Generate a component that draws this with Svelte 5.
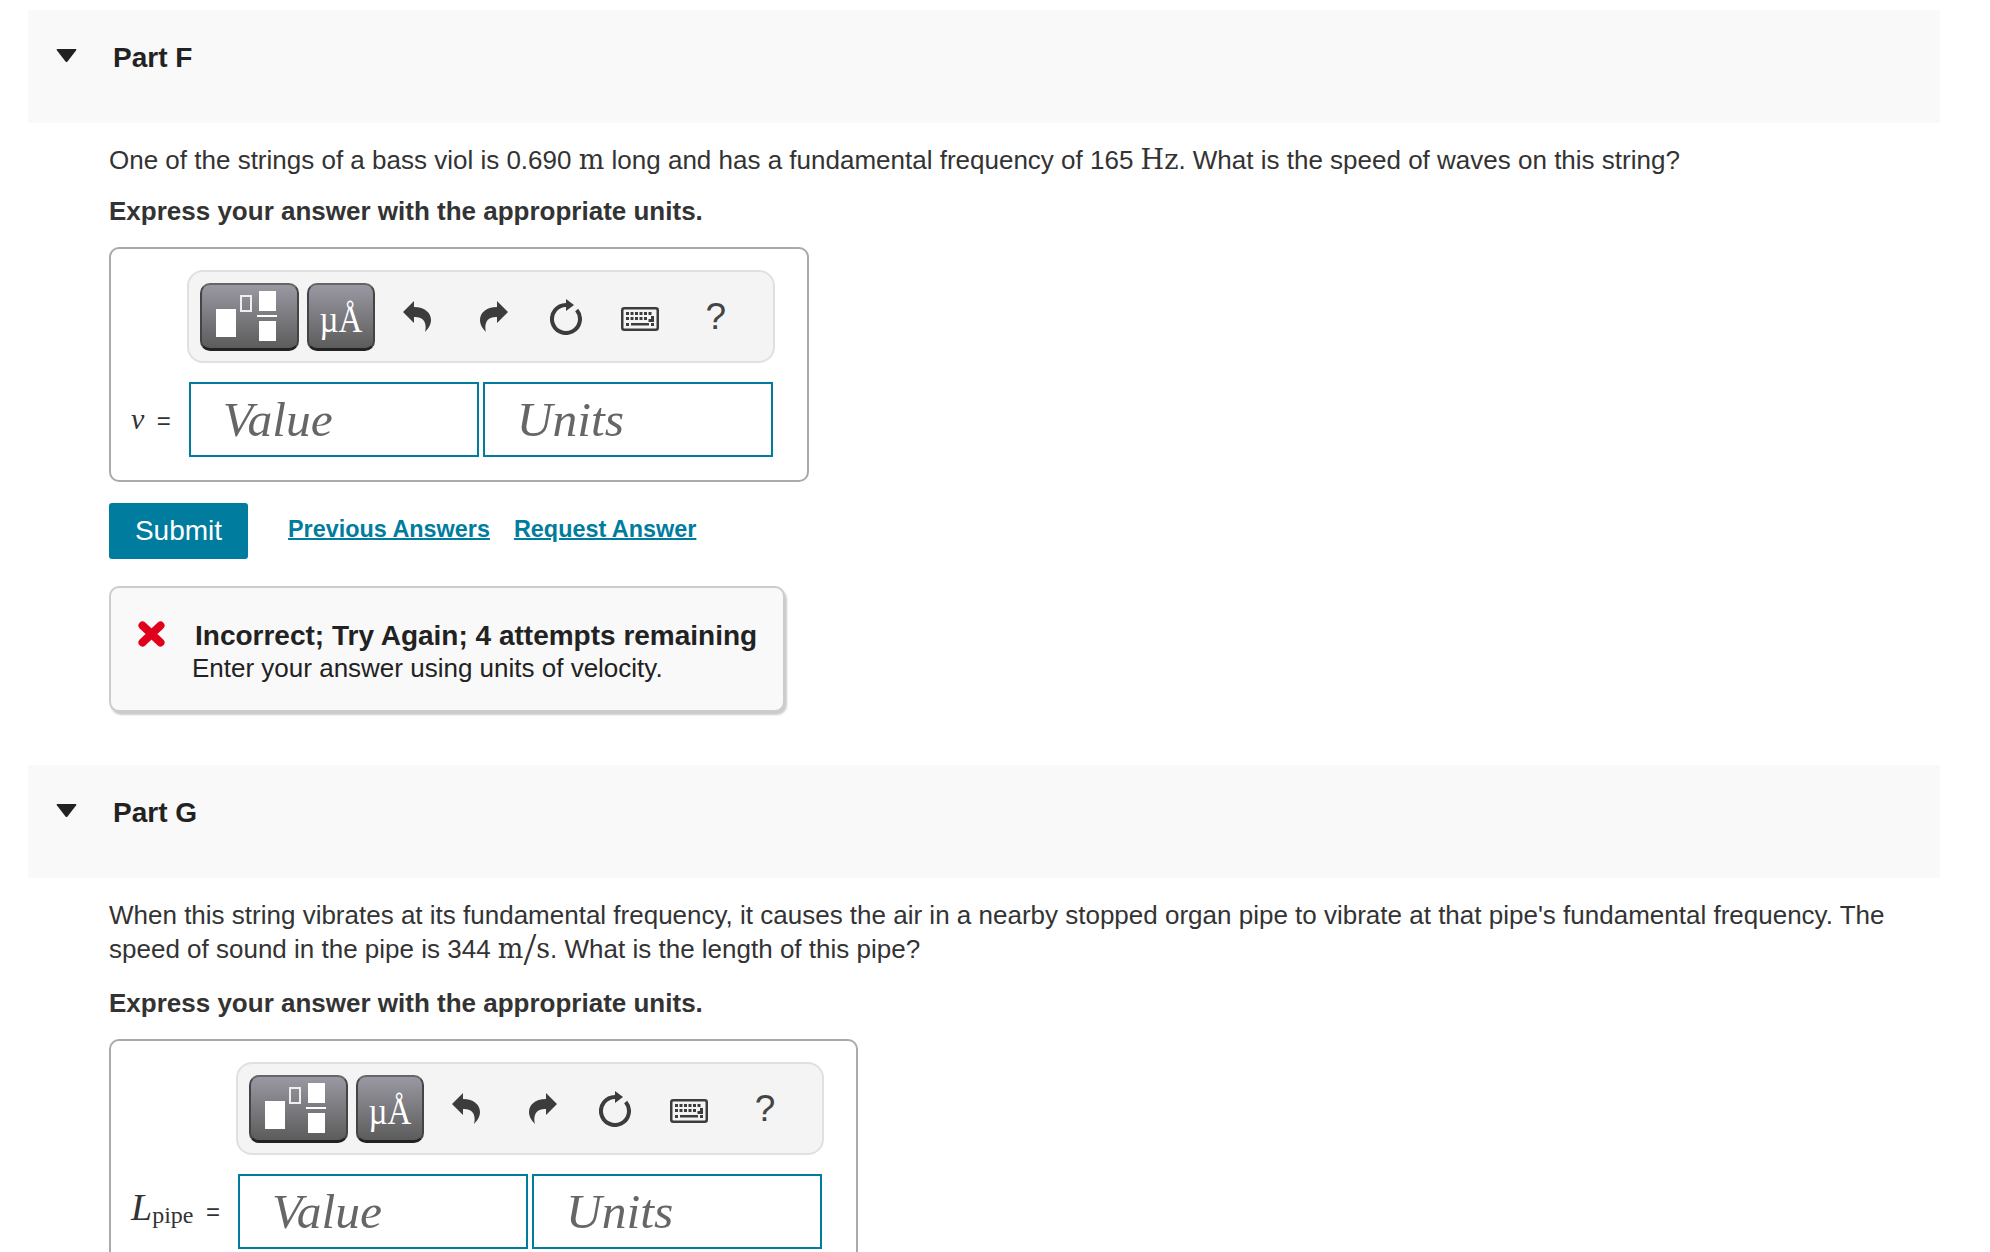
<script>
  const keyRows = [
    { y: 5, xs: [5, 9.5, 14, 18.5, 23, 27.5] },
    { y: 10, xs: [5, 9.5, 14, 18.5, 23] },
  ];
</script>

{#snippet toolbar()}
  <div class="toolbar">
    <span class="tool wide">
      <svg width="61" height="50" viewBox="0 0 61 50">
        <rect x="0" y="18" width="20" height="28" fill="#fff" />
        <rect x="25" y="5" width="10" height="15" fill="none" stroke="#eee" stroke-width="2" />
        <rect x="43" y="0" width="17" height="20" fill="#fff" />
        <rect x="41" y="24" width="20" height="2" fill="#fff" />
        <rect x="43" y="30" width="17" height="20" fill="#fff" />
      </svg>
    </span>
    <span class="tool narrow"><span>µÅ</span></span>
    <span class="slot">
      <svg width="28" height="31" viewBox="0 0 28 31"><path d="M0 11 11 0V6C22 6 28 12 28 19 28 24 25 28 22 31 24 24 22 15 11 16V22Z" /></svg>
    </span>
    <span class="slot">
      <svg width="28" height="31" viewBox="0 0 28 31"><path transform="matrix(-1 0 0 1 28 0)" d="M0 11 11 0V6C22 6 28 12 28 19 28 24 25 28 22 31 24 24 22 15 11 16V22Z" /></svg>
    </span>
    <span class="slot">
      <svg width="32" height="36" viewBox="0 0 32 36">
        <path d="M26.7 11A14 14 0 1 1 16 6" fill="none" stroke="#3c3c3c" stroke-width="4" />
        <path d="M16 0 24 6 16 12Z" />
      </svg>
    </span>
    <span class="slot keys">
      <svg width="38" height="24" viewBox="0 0 38 24">
        <rect x="1.25" y="1.25" width="35.5" height="21.5" rx="2" fill="#f4f4f4" stroke="#3c3c3c" stroke-width="2.5" />
        {#each keyRows as row}
          {#each row.xs as x}
            <rect {x} y={row.y} width="3" height="3" />
          {/each}
        {/each}
        <rect x="30" y="9" width="3" height="6" />
        <rect x="27.5" y="12" width="3" height="3" />
        <rect x="5" y="16" width="3" height="3" />
        <rect x="10" y="16" width="18" height="2.5" />
        <rect x="30" y="16" width="3" height="3" />
      </svg>
    </span>
    <span class="slot help">?</span>
  </div>
{/snippet}

{#snippet answer(label)}
  <div class="answer">
    <span></span>
    {@render toolbar()}
    <span class="label">{@render label()}</span>
    <div class="inputs">
      <input placeholder="Value" aria-label="Value" />
      <input placeholder="Units" aria-label="Units" />
    </div>
  </div>
{/snippet}

{#snippet vLabel()}<i class="var">v</i> <span class="eq">=</span>{/snippet}
{#snippet lLabel()}<i class="big">L</i><sub>pipe</sub> <span class="eq">=</span>{/snippet}

{#snippet header(title)}
  <header class="band">
    <svg class="caret" width="21" height="13" viewBox="0 0 21 13"><path d="M1.5 0H19.5Q21 0 20 1.5L11.5 12.5Q10.5 13.5 9.5 12.5L1 1.5Q0 0 1.5 0Z" /></svg>
    <h2>{title}</h2>
  </header>
{/snippet}

<main class="page">
  <section>
    {@render header("Part F")}
    <div class="body">
      <p>One of the strings of a bass viol is 0.690 <span class="math">m</span> long and has a fundamental frequency of 165 <span class="math">Hz</span>. What is the speed of waves on this string?</p>
      <p class="hint">Express your answer with the appropriate units.</p>
      {@render answer(vLabel)}
      <div class="actions">
        <button>Submit</button>
        <a href="#prev">Previous Answers</a>
        <a href="#req">Request Answer</a>
      </div>
      <div class="feedback">
        <svg class="cross" width="27" height="26" viewBox="0 0 27 26">
          <path d="M4.5 4.5 22.5 21.5M22.5 4.5 4.5 21.5" stroke="#e0001b" stroke-width="8" stroke-linecap="round" fill="none" />
        </svg>
        <div>
          <strong>Incorrect; Try Again; 4 attempts remaining</strong>
          <span>Enter your answer using units of velocity.</span>
        </div>
      </div>
    </div>
  </section>

  <section class="second">
    {@render header("Part G")}
    <div class="body">
      <p>When this string vibrates at its fundamental frequency, it causes the air in a nearby stopped organ pipe to vibrate at that pipe's fundamental frequency. The speed of sound in the pipe is 344 <span class="math">m<span class="slash">/</span>s</span>. What is the length of this pipe?</p>
      <p class="hint">Express your answer with the appropriate units.</p>
      {@render answer(lLabel)}
    </div>
  </section>
</main>

<style>
  :global(body) {
    background: #fff;
    overflow: hidden;
  }

  .page {
    box-sizing: border-box;
    height: 1252px;
    overflow: hidden;
    padding: 10px 50px 0 28px;
    color: #333;
    font-family: "Liberation Sans", Arial, sans-serif;
    font-size: 26px;
    line-height: 34px;
  }

  .second {
    margin-top: 53px;
  }

  .second .hint {
    margin-top: 20px;
  }

  .second .answer {
    margin-top: 19px;
  }

  .band {
    display: flex;
    align-items: flex-start;
    height: 113px;
    background: #f9f9f9;
  }

  .caret {
    fill: #222;
    margin: 39px 0 0 28px;
  }

  h2 {
    margin: 31px 0 0 36px;
    color: #222;
    font-size: 28px;
    line-height: 34px;
    font-weight: 700;
  }

  .body {
    padding: 20px 0 0 81px;
  }

  p {
    margin: 0;
  }

  .hint {
    margin-top: 17px;
    font-weight: 700;
  }

  .math {
    font-family: "DejaVu Serif", serif;
    font-size: 27px;
    line-height: 0;
  }

  .slash {
    font-family: "Liberation Serif", serif;
    font-size: 46px;
    vertical-align: -7px;
  }

  .answer {
    display: inline-grid;
    grid-template-columns: auto auto;
    column-gap: 16px;
    row-gap: 19px;
    align-items: center;
    margin-top: 19px;
    padding: 21px 32px 23px 20px;
    border: 2px solid #aaa;
    border-radius: 10px;
    vertical-align: top;
  }

  .toolbar {
    display: flex;
    align-items: center;
    box-sizing: border-box;
    width: 588px;
    height: 93px;
    padding-left: 11px;
    background: #f4f4f4;
    border: 2px solid #e0e0e0;
    border-radius: 16px;
  }

  .tool {
    display: flex;
    align-items: center;
    justify-content: center;
    box-sizing: border-box;
    height: 68px;
    color: #fff;
    background: linear-gradient(#9a98a2, #5c5c5c);
    border: 2px solid #444;
    border-top-color: #666;
    border-bottom: 3px solid #222;
    border-radius: 10px;
  }

  .wide {
    width: 99px;
    padding-right: 6px;
  }

  .narrow {
    width: 68px;
    margin-left: 8px;
    padding-top: 8px;
    font-family: "Liberation Serif", serif;
    font-size: 33px;
  }

  .narrow span {
    display: inline-block;
    transform: scaleY(1.12);
  }

  .slot {
    display: flex;
    justify-content: center;
    width: 74px;
    fill: #3c3c3c;
  }

  .slot:nth-child(3) {
    margin-left: 5px;
  }

  .slot:nth-child(4) {
    padding-left: 3px;
    margin-right: -2px;
  }

  .keys {
    padding-top: 5px;
  }

  .help {
    padding-left: 2px;
    margin-right: -2px;
    color: #444;
    font-size: 37px;
  }

  .label {
    font-family: "Liberation Serif", serif;
    font-size: 26px;
    white-space: nowrap;
    color: #333;
  }

  .var {
    margin-right: 3px;
    font-size: 30px;
  }

  .big {
    font-size: 38px;
    line-height: 0;
  }

  sub {
    margin-right: 3px;
    font-size: 24px;
    line-height: 0;
    vertical-align: -3px;
  }

  .eq {
    margin-left: 3px;
    font-family: "Liberation Sans", Arial, sans-serif;
    font-size: 24px;
  }

  .inputs {
    display: flex;
    gap: 4px;
    padding: 0 2px;
  }

  input {
    box-sizing: border-box;
    width: 290px;
    height: 75px;
    padding: 0 0 0 32px;
    border: 2px solid #007c9e;
    border-radius: 0;
    outline: none;
    background: #fff;
    font-family: "Liberation Serif", serif;
    font-style: italic;
    font-size: 49.5px;
  }

  input::placeholder {
    color: #666;
    opacity: 1;
  }

  .actions {
    display: flex;
    align-items: flex-start;
    margin-top: 21px;
  }

  button {
    width: 139px;
    height: 56px;
    margin-right: 40px;
    padding: 0;
    border: 0;
    border-radius: 3px;
    background: #007c9e;
    color: #fff;
    font-family: inherit;
    font-size: 28px;
  }

  a {
    margin: 9px 24px 0 0;
    color: #007c9e;
    font-size: 23.4px;
    font-weight: 700;
    line-height: 34px;
    text-decoration-thickness: 2px;
  }

  .feedback {
    display: flex;
    box-sizing: border-box;
    width: 676px;
    height: 126px;
    margin-top: 27px;
    padding: 32px 0 0 27px;
    background: #f9f9f9;
    border: 2px solid #ccc;
    border-radius: 10px;
    box-shadow: 2px 3px 2px #ccc;
    color: #222;
  }

  .cross {
    flex: none;
    margin: 1px 30px 0 0;
  }

  .feedback div {
    display: flex;
    flex-direction: column;
  }

  .feedback strong {
    font-size: 28px;
    line-height: 31px;
  }

  .feedback span {
    margin-left: -3px;
  }
</style>
